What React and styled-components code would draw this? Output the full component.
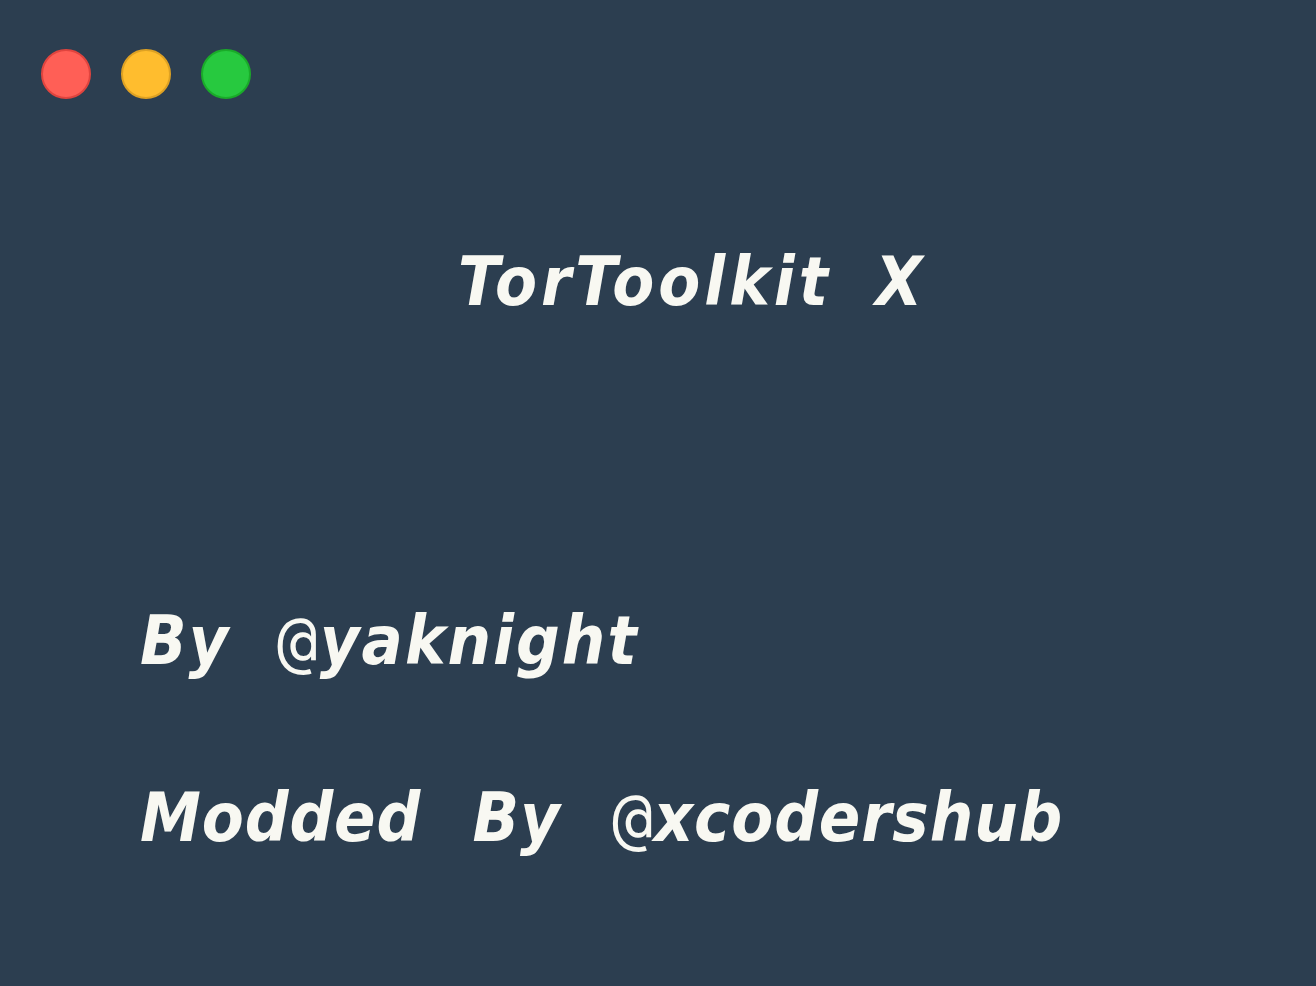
import React from 'react';
import styled, { createGlobalStyle } from 'styled-components';

const GlobalStyle = createGlobalStyle`
  html, body {
    margin: 0;
    padding: 0;
    background: #2c3e50;
  }
`;

const Window = styled.div`
  width: 1316px;
  height: 986px;
  box-sizing: border-box;
  background: #2c3e50;
  padding: 49px 0 0 41px;
  overflow: hidden;
`;

const Controls = styled.div`
  display: flex;
  gap: 30px;
`;

const Dot = styled.span`
  width: 46px;
  height: 46px;
  border-radius: 50%;
  background: ${props => props.fill};
  border: 2px solid ${props => props.edge};
`;

const Text = styled.div`
  font-family: "DejaVu Sans Condensed", "DejaVu Sans", sans-serif;
  font-stretch: condensed;
  font-weight: bold;
  font-style: italic;
  font-size: 68px;
  line-height: 80px;
  color: #f8f8f2;
  white-space: pre;
  letter-spacing: ${props => props.spacing}px;
  word-spacing: ${props => props.words}px;
`;

const Title = styled(Text)`
  margin: 143px 0 0 417px;
`;

const Credit = styled(Text)`
  margin: ${props => props.top}px 0 0 99px;
`;

const At = styled.span`
  font-family: "DejaVu Sans Mono", monospace;
  font-weight: normal;
  font-style: normal;
`;

export default function App() {
  return (
    <>
      <GlobalStyle />
      <Window>
        <Controls>
          <Dot fill="#ff5f56" edge="#e0443e" />
          <Dot fill="#ffbd2e" edge="#dea123" />
          <Dot fill="#27c93f" edge="#1aab29" />
        </Controls>
        <Title spacing={4} words={18}>TorToolkit X</Title>
        <Credit top={279} spacing={2} words={23}>By <At>@</At>yaknight</Credit>
        <Credit top={97} spacing={0.9} words={29}>Modded By <At>@</At>xcodershub</Credit>
      </Window>
    </>
  );
}
